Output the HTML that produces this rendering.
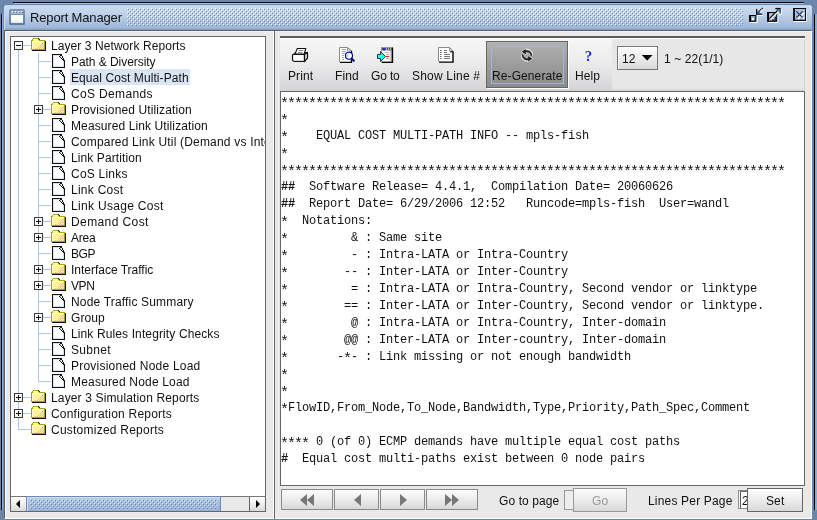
<!DOCTYPE html>
<html><head><meta charset="utf-8"><title>Report Manager</title>
<style>
*{box-sizing:border-box;margin:0;padding:0}
html,body{width:817px;height:520px;overflow:hidden}
body{background:#6a86a8;position:relative;font-family:"Liberation Sans",Arial,sans-serif;font-size:12px;color:#111}
.abs,.hl,.vl,.bx,.ic,.tl{position:absolute}
#shT{left:13px;top:2px;width:791px;height:1px;background:#000}
#shT2{left:14px;top:3px;width:790px;height:1px;background:#a9c1e0}
#shL{left:1px;top:14px;width:1px;height:496px;background:#000}
#shR{left:814px;top:14px;width:1px;height:496px;background:#000}
#edgeL{left:2px;top:14px;width:2px;height:496px;background:linear-gradient(90deg,#8eacd3 50%,#6f8cb2 50%)}
#edgeR{left:815px;top:14px;width:2px;height:496px;background:#8eabd0}
#win{left:4px;top:5px;width:808px;height:514px;background:#e9e9e9;border-radius:3px 3px 0 0}
#title{left:4px;top:5px;width:808px;height:25px;background:linear-gradient(#c9dbf0 0,#c0d3ea 30%,#a9bedd 75%,#a2b8d9 90%,#809cc5 100%);border-radius:4px 4px 0 0;border-top:1px solid #c5d6ec;border-left:1px solid #c9daef}
#bumps{left:127px;top:9px;width:618px;height:17px;background-image:radial-gradient(circle at 0.5px 0.5px,#e8f0fa 0.6px,transparent 0.9px),radial-gradient(circle at 1.5px 1.5px,#8098ba 0.6px,transparent 0.9px);background-size:4px 4px;opacity:.9}
#ttext{left:30px;top:10px;font-size:13px;line-height:16px;letter-spacing:-.15px;white-space:nowrap;color:#111}
#cb{left:4px;top:30px;width:808px;height:489px;border:1px solid #56606e;border-left-color:#5a5a5a;border-right-color:#fff;border-bottom-color:#fff}
#cb2{left:5px;top:31px;width:806px;height:487px;border-left:1px solid #fff;border-top:1px solid #f4f4f4}
#tree{left:10px;top:36px;width:256px;height:476px;background:#fff;border:1px solid #666;overflow:hidden}
#treein{left:0;top:0;width:817px;height:520px;clip-path:inset(37px 552px 24px 11px)}
.hl{height:1px;background:#adc7ea}
.vl{width:1px;background:#adc7ea}
.bx{width:9px;height:9px;border:1px solid #3a3a3a;background:linear-gradient(135deg,#fff,#eee)}
.bx b{position:absolute;left:1px;top:3px;width:5px;height:1px;background:#111}
.bx u{position:absolute;left:3px;top:1px;width:1px;height:5px;background:#111}
.tl{height:16px;line-height:18px;padding:0 1px;white-space:nowrap;font-size:12px;color:#111;letter-spacing:.1px;overflow:hidden}
.sel{background:#dae5f4}
#hs{left:11px;top:496px;width:254px;height:15px;background:#e9e9e9;border-top:1px solid #777}
.sbtn{top:497px;width:16px;height:14px;background:linear-gradient(#fff,#f2f2f2 40%,#d9d9d9)}
#thumb{left:26px;top:496px;width:195px;height:15px;background:linear-gradient(#bdd0e8,#a5bddc 50%,#98b3d5);border:1px solid #6b8cba;border-bottom:0;box-shadow:inset 1px 1px 0 #cfdef0}
#thumbd{left:32px;top:499px;width:182px;height:10px;background-image:radial-gradient(circle at 0.5px 0.5px,#e4eefa 0.6px,transparent 0.9px),radial-gradient(circle at 1.5px 1.5px,#6f8cb2 0.6px,transparent 0.9px);background-size:4px 4px}
#divW{left:273px;top:31px;width:1px;height:488px;background:#fff}
#divD{left:274px;top:31px;width:1px;height:488px;background:#666}
#tb{left:280px;top:36px;width:525px;height:55px;border-top:2px solid #5a5a5a;background:#e7e7e7;box-shadow:inset -1px -1px 0 #d2d2d9,inset 0 -2px 0 #dcdce1}
#tbg{left:280px;top:39px;width:332px;height:52px;background:linear-gradient(#f6f6f6,#ececec 45%,#d4d4d8)}
#tbw{left:280px;top:38px;width:526px;height:1px;background:#fff}
.tbl{top:69px;letter-spacing:.1px;font-size:12px;line-height:14px;white-space:nowrap;text-align:center}
#regen{left:486px;top:41px;width:82px;height:47px;background:linear-gradient(#b2b2b2,#9c9c9c 50%,#8c8c8c);border:1px solid #666;box-shadow:1px 1px 0 #fff}
#regenf{left:491px;top:46px;width:73px;height:38px;border:1px solid #9db8d9}
#combo{left:617px;top:46px;width:41px;height:24px;background:linear-gradient(#fff,#ececec 50%,#d8d8d8);border:1px solid #777;box-shadow:inset 1px 1px 0 #fff}
#ta{left:280px;top:91px;width:525px;height:395px;background:#fff;border:1px solid #666}
pre{position:absolute;left:281px;top:94px;font-family:"Liberation Mono","Courier New",monospace;font-size:12px;line-height:17px;letter-spacing:-0.2px;color:#111;white-space:pre}
.a{font-size:15px;letter-spacing:-2px;position:relative;top:3px;left:-1px;line-height:0}
.nb{top:489px;height:21px;background:linear-gradient(#fdfdfd,#ececec 50%,#d8d8d8);border:1px solid #8a8a8a}
.lbl{font-size:12px;line-height:14px;white-space:nowrap;letter-spacing:.1px}
#all{position:absolute;left:0;top:0;width:817px;height:520px;will-change:transform}
</style></head><body>
<div id="all">
<div class="abs" id="shT"></div><div class="abs" id="shT2"></div>
<div class="abs" id="edgeL"></div><div class="abs" id="edgeR"></div>
<div class="abs" id="shL"></div><div class="abs" id="shR"></div>
<div class="abs" id="win"></div>
<div class="abs" id="title"></div>
<svg class="abs" style="left:127px;top:8px" width="616" height="18"><defs><pattern id="bp" width="4" height="4" patternUnits="userSpaceOnUse"><rect x="0" y="0" width="1" height="1" fill="#fff"/><rect x="2" y="2" width="1" height="1" fill="#fff"/><rect x="1" y="1" width="1" height="1" fill="#6f88ad"/><rect x="3" y="3" width="1" height="1" fill="#6f88ad"/></pattern></defs><rect width="616" height="18" fill="url(#bp)"/></svg>
<svg class="abs" style="left:9px;top:9px" width="16" height="16" viewBox="0 0 16 16"><defs><linearGradient id="wi" x1="0" y1="0" x2="0" y2="1"><stop offset="0" stop-color="#7d97b8"/><stop offset="1" stop-color="#5f7a9d"/></linearGradient><linearGradient id="ww" x1="0" y1="0" x2="0" y2="1"><stop offset="0" stop-color="#fff"/><stop offset=".6" stop-color="#fff"/><stop offset="1" stop-color="#e4e4e4"/></linearGradient></defs><rect x="0" y="0" width="16" height="16" rx="1.500" fill="url(#wi)"/><rect x="2" y="2" width="12" height="3" fill="#a9bfdb"/><g fill="#fff"><rect x="3" y="2" width="1" height="1"/><rect x="6" y="2" width="1" height="1"/><rect x="9" y="2" width="1" height="1"/><rect x="12" y="2" width="1" height="1"/></g><g fill="#56708f"><rect x="4" y="3" width="1" height="1"/><rect x="7" y="3" width="1" height="1"/><rect x="10" y="3" width="1" height="1"/><rect x="13" y="3" width="1" height="1"/></g><rect x="2" y="6" width="12" height="8" fill="url(#ww)"/></svg>
<svg class="abs" style="left:745px;top:5px" width="66" height="22" viewBox="745 5 66 22">
<defs><linearGradient id="bg1" x1="0" y1="0" x2="1" y2="1"><stop offset="0" stop-color="#b4c8e2"/><stop offset="1" stop-color="#56759f"/></linearGradient></defs>
<path d="M750 22.400 L757.300 22.400 L757.300 16.500" fill="none" stroke="#fff" stroke-width="1"/>
<rect x="749.600" y="15.500" width="6.200" height="5.800" fill="url(#bg1)" stroke="#000" stroke-width="1"/>
<path d="M750.500 15.500 L750.500 21.500" stroke="#000" stroke-width="1"/>
<rect x="752" y="18" width="2" height="2" fill="#fff"/>
<path d="M757.500 15.500 L763 15.500" stroke="#fff" stroke-width="1"/>
<path d="M763.700 9.200 L760 13" stroke="#fff" stroke-width="1" opacity=".8"/>
<path d="M757 10 L761.500 14 L757 14 Z" fill="#56759f"/>
<path d="M756.600 9 L756.600 14.200 L762.300 14.200" fill="none" stroke="#000" stroke-width="1.100"/>
<path d="M762.700 7.800 L758.200 12.300" fill="none" stroke="#111" stroke-width="1.200" stroke-dasharray="1.300 .700"/>
<path d="M768 22.400 L777.800 22.400 L777.800 15" fill="none" stroke="#fff" stroke-width="1"/>
<rect x="767.600" y="12.500" width="9.100" height="8.800" fill="url(#bg1)" stroke="#000" stroke-width="1"/>
<path d="M768.500 12.500 L768.500 21.500" stroke="#000" stroke-width="1"/>
<rect x="769.500" y="14.500" width="4" height="4.500" fill="#c6d8ef" opacity=".75"/>
<path d="M775.700 17 L775.700 20.300 L772 20.300" fill="none" stroke="#111" stroke-width="1"/>
<path d="M770.500 19.500 L778.500 11.500" stroke="#fff" stroke-width="1.200"/>
<path d="M769.300 18.700 L777.800 10.200" stroke="#000" stroke-width="1.100"/>
<path d="M781.600 9 L781.600 14.300 L779 14.300" fill="none" stroke="#fff" stroke-width="1"/>
<path d="M776 9 L780.600 9 L780.600 13.600 Z" fill="#56759f"/>
<path d="M775.300 8.500 L780.800 8.500" stroke="#000" stroke-width="1.200"/>
<path d="M780.500 8.500 L780.500 13.600" stroke="#3a5680" stroke-width="1"/>
<path d="M794 21.500 L806.500 21.500 L806.500 9" fill="none" stroke="#fff" stroke-width="1"/>
<rect x="793.600" y="8.500" width="12" height="12" fill="#a9bfdc" stroke="#000" stroke-width="1"/>
<path d="M794.500 9 L794.500 20" stroke="#111" stroke-width="1"/>
<path d="M795 19.900 L805 19.900" fill="none" stroke="#111" stroke-width=".6"/>
<path d="M797 12 L803 18 M803 12 L797 18" stroke="#fff" stroke-width="1.600" transform="translate(1,1)"/>
<path d="M796.500 11.500 L802.500 17.500 M802.500 11.500 L796.500 17.500" stroke="#5a7396" stroke-width="1.700"/>
<path d="M796.500 11.500 L802.500 17.500 M802.500 11.500 L796.500 17.500" stroke="#111" stroke-width="1" stroke-dasharray="1.400 1"/>
</svg>
<div class="abs" id="ttext">Report Manager</div>
<div class="abs" id="cb"></div><div class="abs" id="cb2"></div>
<div class="abs" id="tree"></div>
<div class="abs" id="treein">
<i class="vl" style="left:18px;top:50px;height:380px"></i>
<i class="vl" style="left:38px;top:53px;height:329px"></i>
<svg width="0" height="0" style="position:absolute"><defs><g id="fo" shape-rendering="crispEdges"><path d="M1 3 L2 1 L7 1 L8 3 L13 3 L13 11 L1 11 Z" fill="#fcf590"/><g fill="#fffce0"><rect x="2" y="1" width="5" height="1"/><rect x="1" y="3" width="1" height="8"/><rect x="2" y="3" width="11" height="1"/></g><g fill="#f9b8a0"><rect x="12" y="4" width="1" height="1"/><rect x="11" y="5" width="1" height="1"/><rect x="10" y="6" width="1" height="1"/><rect x="12" y="6" width="1" height="1"/><rect x="9" y="7" width="1" height="1"/><rect x="11" y="7" width="1" height="1"/><rect x="8" y="8" width="1" height="1"/><rect x="10" y="8" width="1" height="1"/><rect x="12" y="8" width="1" height="1"/><rect x="7" y="9" width="1" height="1"/><rect x="9" y="9" width="1" height="1"/><rect x="11" y="9" width="1" height="1"/><rect x="4" y="10" width="1" height="1"/><rect x="6" y="10" width="1" height="1"/><rect x="8" y="10" width="1" height="1"/><rect x="10" y="10" width="1" height="1"/><rect x="12" y="10" width="1" height="1"/></g><g fill="#aaa214"><rect x="0" y="3" width="1" height="9"/><rect x="1" y="1" width="1" height="2"/><rect x="2" y="0" width="5" height="1"/><rect x="7" y="1" width="1" height="1"/><rect x="8" y="2" width="6" height="1"/><rect x="13" y="2" width="1" height="10"/><rect x="0" y="11" width="14" height="1"/><rect x="0" y="2" width="1" height="1"/></g><g fill="#111"><rect x="14" y="3" width="1" height="10"/><rect x="1" y="12" width="14" height="1"/><rect x="7" y="0" width="1" height="1"/><rect x="8" y="1" width="1" height="1"/></g></g><g id="fi" shape-rendering="crispEdges"><rect x="1" y="1" width="11" height="12" fill="#fff"/><g fill="#d3e3f8"><rect x="1" y="1" width="1" height="12"/><rect x="1" y="1" width="7" height="1"/><rect x="11" y="7" width="1" height="6"/><rect x="1" y="12" width="11" height="1"/><rect x="8" y="2" width="1" height="1"/><rect x="9" y="3" width="1" height="1"/><rect x="10" y="4" width="1" height="1"/><rect x="8" y="3" width="1" height="1"/><rect x="9" y="4" width="1" height="1"/><rect x="10" y="5" width="1" height="1"/></g><g fill="#111"><rect x="0" y="0" width="1" height="14"/><rect x="0" y="0" width="10" height="1"/><rect x="0" y="13" width="13" height="1"/><rect x="12" y="6" width="1" height="8"/><rect x="7" y="2" width="1" height="1"/><rect x="8" y="3" width="1" height="1"/><rect x="9" y="4" width="1" height="1"/><rect x="10" y="5" width="1" height="1"/><rect x="11" y="6" width="1" height="1"/><rect x="8" y="1" width="2" height="1"/><rect x="10" y="2" width="1" height="2"/><rect x="11" y="4" width="1" height="2"/></g></g></defs></svg>
<i class="hl" style="left:23px;top:45px;width:8px"></i>
<span class="bx" style="left:14px;top:41px"><b></b></span>
<svg class="ic" style="left:31px;top:38px" width="16" height="14"><use href="#fo"/></svg>
<span class="tl" style="left:50px;top:37px;letter-spacing:0.077px">Layer 3 Network Reports</span>
<i class="hl" style="left:38px;top:61px;width:13px"></i>
<svg class="ic" style="left:52px;top:54px" width="13" height="14"><use href="#fi"/></svg>
<span class="tl" style="left:70px;top:53px;letter-spacing:-0.05px">Path &amp; Diversity</span>
<i class="hl" style="left:38px;top:77px;width:13px"></i>
<svg class="ic" style="left:52px;top:70px" width="13" height="14"><use href="#fi"/></svg>
<span class="tl sel" style="left:70px;top:69px;letter-spacing:0.075px">Equal Cost Multi-Path</span>
<i class="hl" style="left:38px;top:93px;width:13px"></i>
<svg class="ic" style="left:52px;top:86px" width="13" height="14"><use href="#fi"/></svg>
<span class="tl" style="left:70px;top:85px;letter-spacing:0.35px">CoS Demands</span>
<i class="hl" style="left:43px;top:109px;width:8px"></i>
<span class="bx" style="left:34px;top:105px"><b></b><u></u></span>
<svg class="ic" style="left:51px;top:102px" width="16" height="14"><use href="#fo"/></svg>
<span class="tl" style="left:70px;top:101px;letter-spacing:0.123px">Provisioned Utilization</span>
<i class="hl" style="left:38px;top:125px;width:13px"></i>
<svg class="ic" style="left:52px;top:118px" width="13" height="14"><use href="#fi"/></svg>
<span class="tl" style="left:70px;top:117px;letter-spacing:0.11px">Measured Link Utilization</span>
<i class="hl" style="left:38px;top:141px;width:13px"></i>
<svg class="ic" style="left:52px;top:134px" width="13" height="14"><use href="#fi"/></svg>
<span class="tl" style="left:70px;top:133px;letter-spacing:0.192px">Compared Link Util (Demand vs Interface)</span>
<i class="hl" style="left:38px;top:157px;width:13px"></i>
<svg class="ic" style="left:52px;top:150px" width="13" height="14"><use href="#fi"/></svg>
<span class="tl" style="left:70px;top:149px;letter-spacing:0.1px">Link Partition</span>
<i class="hl" style="left:38px;top:173px;width:13px"></i>
<svg class="ic" style="left:52px;top:166px" width="13" height="14"><use href="#fi"/></svg>
<span class="tl" style="left:70px;top:165px;letter-spacing:0.225px">CoS Links</span>
<i class="hl" style="left:38px;top:189px;width:13px"></i>
<svg class="ic" style="left:52px;top:182px" width="13" height="14"><use href="#fi"/></svg>
<span class="tl" style="left:70px;top:181px;letter-spacing:0.256px">Link Cost</span>
<i class="hl" style="left:38px;top:205px;width:13px"></i>
<svg class="ic" style="left:52px;top:198px" width="13" height="14"><use href="#fi"/></svg>
<span class="tl" style="left:70px;top:197px;letter-spacing:0.314px">Link Usage Cost</span>
<i class="hl" style="left:43px;top:221px;width:8px"></i>
<span class="bx" style="left:34px;top:217px"><b></b><u></u></span>
<svg class="ic" style="left:51px;top:214px" width="16" height="14"><use href="#fo"/></svg>
<span class="tl" style="left:70px;top:213px;letter-spacing:0.4px">Demand Cost</span>
<i class="hl" style="left:43px;top:237px;width:8px"></i>
<span class="bx" style="left:34px;top:233px"><b></b><u></u></span>
<svg class="ic" style="left:51px;top:230px" width="16" height="14"><use href="#fo"/></svg>
<span class="tl" style="left:70px;top:229px;letter-spacing:-0.233px">Area</span>
<i class="hl" style="left:38px;top:253px;width:13px"></i>
<svg class="ic" style="left:52px;top:246px" width="13" height="14"><use href="#fi"/></svg>
<span class="tl" style="left:70px;top:245px;letter-spacing:-0.4px">BGP</span>
<i class="hl" style="left:43px;top:269px;width:8px"></i>
<span class="bx" style="left:34px;top:265px"><b></b><u></u></span>
<svg class="ic" style="left:51px;top:262px" width="16" height="14"><use href="#fo"/></svg>
<span class="tl" style="left:70px;top:261px;letter-spacing:-0.009px">Interface Traffic</span>
<i class="hl" style="left:43px;top:285px;width:8px"></i>
<span class="bx" style="left:34px;top:281px"><b></b><u></u></span>
<svg class="ic" style="left:51px;top:278px" width="16" height="14"><use href="#fo"/></svg>
<span class="tl" style="left:70px;top:277px;letter-spacing:-0.4px">VPN</span>
<i class="hl" style="left:38px;top:301px;width:13px"></i>
<svg class="ic" style="left:52px;top:294px" width="13" height="14"><use href="#fi"/></svg>
<span class="tl" style="left:70px;top:293px;letter-spacing:0.174px">Node Traffic Summary</span>
<i class="hl" style="left:43px;top:317px;width:8px"></i>
<span class="bx" style="left:34px;top:313px"><b></b><u></u></span>
<svg class="ic" style="left:51px;top:310px" width="16" height="14"><use href="#fo"/></svg>
<span class="tl" style="left:70px;top:309px;letter-spacing:0.1px">Group</span>
<i class="hl" style="left:38px;top:333px;width:13px"></i>
<svg class="ic" style="left:52px;top:326px" width="13" height="14"><use href="#fi"/></svg>
<span class="tl" style="left:70px;top:325px;letter-spacing:0.119px">Link Rules Integrity Checks</span>
<i class="hl" style="left:38px;top:349px;width:13px"></i>
<svg class="ic" style="left:52px;top:342px" width="13" height="14"><use href="#fi"/></svg>
<span class="tl" style="left:70px;top:341px;letter-spacing:0.3px">Subnet</span>
<i class="hl" style="left:38px;top:365px;width:13px"></i>
<svg class="ic" style="left:52px;top:358px" width="13" height="14"><use href="#fi"/></svg>
<span class="tl" style="left:70px;top:357px;letter-spacing:0.225px">Provisioned Node Load</span>
<i class="hl" style="left:38px;top:381px;width:13px"></i>
<svg class="ic" style="left:52px;top:374px" width="13" height="14"><use href="#fi"/></svg>
<span class="tl" style="left:70px;top:373px;letter-spacing:0.182px">Measured Node Load</span>
<i class="hl" style="left:23px;top:397px;width:8px"></i>
<span class="bx" style="left:14px;top:393px"><b></b><u></u></span>
<svg class="ic" style="left:31px;top:390px" width="16" height="14"><use href="#fo"/></svg>
<span class="tl" style="left:50px;top:389px;letter-spacing:0.144px">Layer 3 Simulation Reports</span>
<i class="hl" style="left:23px;top:413px;width:8px"></i>
<span class="bx" style="left:14px;top:409px"><b></b><u></u></span>
<svg class="ic" style="left:31px;top:406px" width="16" height="14"><use href="#fo"/></svg>
<span class="tl" style="left:50px;top:405px;letter-spacing:0.2px">Configuration Reports</span>
<i class="hl" style="left:18px;top:429px;width:13px"></i>
<svg class="ic" style="left:31px;top:422px" width="16" height="14"><use href="#fo"/></svg>
<span class="tl" style="left:50px;top:421px;letter-spacing:0.235px">Customized Reports</span>
</div>
<div class="abs" id="hs"></div>
<div class="abs sbtn" style="left:11px;width:15px"></div>
<div class="abs sbtn" style="left:249px;border-left:1px solid #666"></div>
<div class="abs" id="thumb"></div><svg class="abs" style="left:30px;top:499px" width="187" height="10"><defs><pattern id="bp2" width="4" height="4" patternUnits="userSpaceOnUse"><rect x="0" y="0" width="1" height="1" fill="#d4e2f3"/><rect x="2" y="2" width="1" height="1" fill="#d4e2f3"/><rect x="1" y="1" width="1" height="1" fill="#6785b0"/><rect x="3" y="3" width="1" height="1" fill="#6785b0"/></pattern></defs><rect width="187" height="10" fill="url(#bp2)"/></svg>
<svg class="abs" style="left:11px;top:497px" width="16" height="14"><path d="M5 7 L9 3 L9 11 Z" fill="#000"/></svg>
<svg class="abs" style="left:249px;top:497px" width="16" height="14"><path d="M11 7 L7 3 L7 11 Z" fill="#000"/></svg>
<div class="abs" id="divW"></div><div class="abs" id="divD"></div>
<div class="abs" id="tb"></div><div class="abs" id="tbg"></div><div class="abs" id="tbw"></div>
<div class="abs" id="regen"></div><div class="abs" id="regenf"></div>
<svg class="abs" style="left:290px;top:46px" width="20" height="18" viewBox="0 0 20 18">
<defs><linearGradient id="pg" x1="0" y1="0" x2="0" y2="1"><stop offset="0" stop-color="#fff"/><stop offset=".7" stop-color="#fff"/><stop offset="1" stop-color="#bbb"/></linearGradient></defs>
<path d="M7.300 2.500 L15.700 2.500 L14.300 8 L5 8 Z" fill="#fff" stroke="#111" stroke-width="1.100"/>
<path d="M8.500 4.500 L13.200 4.500 M7.800 6.500 L12.400 6.500" stroke="#888" stroke-width="1"/>
<path d="M2.600 9 L5 6.700 M15 6.300 L17.500 6.800" fill="none" stroke="#111" stroke-width="1"/>
<path d="M2.500 9.300 Q2.500 8.500 3.300 8.500 L14.500 8.500 L14.500 15.500 L4.500 15.500 Q2.500 15.300 2.500 13.500 Z" fill="url(#pg)" stroke="#111" stroke-width="1.200"/>
<path d="M14.500 8.500 L17.500 6.500 L17.500 12.200 L14.500 15.500 Z" fill="#d8d8d8" stroke="#111" stroke-width="1.200" stroke-linejoin="round"/>
</svg>
<svg class="abs" style="left:338px;top:46px" width="20" height="18" viewBox="0 0 20 18">
<path d="M1.500 1.500 L9.500 1.500 L13.500 5 L13.500 16 L1.500 16 Z" fill="#fff"/>
<path d="M9.500 1.500 L9.500 5 L13.500 5 Z" fill="#eee" stroke="#999" stroke-width="1"/>
<path d="M1.500 16 L1.500 1.500 L9.500 1.500 L13.300 5" fill="none" stroke="#8a8a8a" stroke-width="1"/>
<path d="M13.500 4.800 L13.500 16.300 L2 16.300" fill="none" stroke="#000" stroke-width="1.300"/>
<path d="M4 3.500 L8 3.500 M4 5.500 L8 5.500 M4 7.500 L7 7.500 M4 9.500 L6 9.500 M4 11.500 L6 11.500 M4 13.500 L6 13.500" stroke="#aaa" stroke-width="1"/>
<circle cx="11" cy="9.800" r="3.500" fill="#fff" stroke="#00008c" stroke-width="1.100"/>
<path d="M9.300 10.800 L9.300 9.300 L10.400 8.300" stroke="#3ff" stroke-width="1.100" fill="none"/>
<path d="M13.700 12.600 L15.800 14.700" stroke="#00008c" stroke-width="2" stroke-linecap="round"/>
</svg>
<svg class="abs" style="left:376px;top:46px" width="20" height="18" viewBox="0 0 20 18">
<defs><linearGradient id="ng" x1="0" y1="0" x2="1" y2="0"><stop offset="0" stop-color="#fff"/><stop offset=".7" stop-color="#fff"/><stop offset="1" stop-color="#aaa"/></linearGradient></defs>
<rect x="5.500" y="1.500" width="10.500" height="14.500" fill="url(#ng)" stroke="#999" stroke-width="1"/>
<path d="M16.500 1.500 L16.500 16.400 L6 16.400" fill="none" stroke="#000" stroke-width="1.300"/>
<rect x="6" y="2" width="10" height="2.400" fill="#555"/>
<rect x="7" y="2" width="2" height="2.400" fill="#22f"/>
<rect x="10" y="2.500" width="1" height="1" fill="#fff"/><rect x="12" y="2.500" width="1" height="1" fill="#fff"/><rect x="14" y="2.500" width="1" height="1" fill="#fff"/>
<path d="M8.500 6.500 L13 6.500 M10 8.500 L13 8.500 M10 12.500 L13 12.500" stroke="#bbb" stroke-width="1"/>
<path d="M10 10.500 L13.200 10.500" stroke="#f22" stroke-width="1.200"/>
<path d="M1.500 8.500 L4.500 8.500 L4.500 5.600 L9.500 10.500 L4.500 15.400 L4.500 12.500 L1.500 12.500 Z" fill="#2ff" stroke="#000" stroke-width=".8"/>
</svg>
<svg class="abs" style="left:436px;top:46px" width="20" height="18" viewBox="0 0 20 18">
<path d="M2.500 1.500 L13.500 1.500 L16.500 5 L16.500 15.500 L2.500 15.500 Z" fill="#fff"/>
<path d="M13.500 1.500 L13.500 5 L16.800 5 Z" fill="#f2f2f2" stroke="#999" stroke-width="1"/>
<path d="M2.500 15.500 L2.500 1.500 L13.500 1.500 L16.800 5" fill="none" stroke="#8a8a8a" stroke-width="1"/>
<path d="M17 5.300 L17 16.100 L3 16.100" fill="none" stroke="#000" stroke-width="1.400"/>
<path d="M14 5.800 L16.500 5.800" stroke="#111" stroke-width="1.200"/>
<path d="M4 4.500 L5.700 4.500 M8 4.500 L11 4.500 M4 6.500 L5.700 6.500 M8 6.500 L11 6.500 M4 8.500 L5.700 8.500 M8 8.500 L14 8.500 M4 10.500 L5.700 10.500 M8 10.500 L14 10.500 M4 12.500 L5.700 12.500 M8 12.500 L14 12.500" stroke="#777" stroke-width="1"/>
</svg>
<svg class="abs" style="left:519px;top:47px" width="16" height="17" viewBox="0 0 16 17">
<g fill="none" stroke="#fff" stroke-width="3.200" opacity=".55"><path d="M5 4.600 A4.400 4.400 0 0 1 12.400 8.600"/><path d="M11 11.800 A4.400 4.400 0 0 1 3.600 7.800"/></g>
<g fill="#fff" opacity=".55"><path d="M1.800 4.800 L7.400 1 L7.400 8.200 Z"/><path d="M14.200 11.600 L8.600 15.400 L8.600 8.200 Z"/></g>
<g fill="none" stroke="#1a1a1a" stroke-width="1.700"><path d="M6 4.600 A4.400 4.400 0 0 1 12.400 8.800"/><path d="M10 11.800 A4.400 4.400 0 0 1 3.600 7.600"/></g>
<path d="M2.800 4.700 L6.800 2 L6.800 7.300 Z" fill="#1a1a1a"/><path d="M13.200 11.700 L9.200 14.400 L9.200 9.100 Z" fill="#1a1a1a"/>
</svg>
<div class="abs" style="left:584px;top:47px;width:9px;height:18px;font:bold 15px/18px 'Liberation Serif',serif;color:#2222ff;text-align:center">?</div>
<div class="abs tbl" style="left:288px">Print</div>
<div class="abs tbl" style="left:335px">Find</div>
<div class="abs tbl" style="left:371px;letter-spacing:-.15px">Go to</div>
<div class="abs tbl" style="left:412px;letter-spacing:.2px">Show Line #</div>
<div class="abs tbl" style="left:492px">Re-Generate</div>
<div class="abs tbl" style="left:575px">Help</div>
<div class="abs" id="combo"></div>
<div class="abs lbl" style="left:622px;top:52px">12</div>
<svg class="abs" style="left:640px;top:54px" width="14" height="8"><path d="M1.800 1 L12.600 1 L7.200 6.600 Z" fill="#000"/></svg>
<div class="abs lbl" style="left:664px;top:52px">1 ~ 22(1/1)</div>
<div class="abs" id="ta"></div>
<pre><span class="a">************************************************************************</span>
<span class="a">*</span>
<span class="a">*</span>    EQUAL COST MULTI-PATH INFO -- mpls-fish
<span class="a">*</span>
<span class="a">************************************************************************</span>
<b>##</b>  Software Release= 4.4.1,  Compilation Date= 20060626
<b>##</b>  Report Date= 6/29/2006 12:52   Runcode=mpls-fish  User=wandl
<span class="a">*</span>  Notations:
<span class="a">*</span>         &amp; : Same site
<span class="a">*</span>         - : Intra-LATA or Intra-Country
<span class="a">*</span>        -- : Inter-LATA or Inter-Country
<span class="a">*</span>         = : Intra-LATA or Intra-Country, Second vendor or linktype
<span class="a">*</span>        == : Inter-LATA or Inter-Country, Second vendor or linktype.
<span class="a">*</span>         @ : Intra-LATA or Intra-Country, Inter-domain
<span class="a">*</span>        @@ : Inter-LATA or Inter-country, Inter-domain
<span class="a">*</span>       -<span class="a">*</span>- : Link missing or not enough bandwidth
<span class="a">*</span>
<span class="a">*</span>
<span class="a">*</span>FlowID,From_Node,To_Node,Bandwidth,Type,Priority,Path_Spec,Comment

<span class="a">****</span> 0 (of 0) ECMP demands have multiple equal cost paths
<b>#</b>  Equal cost multi-paths exist between 0 node pairs</pre>
<div class="abs nb" style="left:281px;width:52px"></div>
<div class="abs nb" style="left:334px;width:45px"></div>
<div class="abs nb" style="left:380px;width:45px"></div>
<div class="abs nb" style="left:426px;width:52px"></div>
<svg class="abs" style="left:281px;top:489px" width="200" height="21" viewBox="0 0 200 21"><g fill="#777">
<path d="M19 11 L26 5 L26 17 Z M26 11 L33 5 L33 17 Z"/>
<path d="M73 11 L80 5 L80 17 Z"/>
<path d="M126 11 L119 5 L119 17 Z"/>
<path d="M171 11 L164 5 L164 17 Z M178 11 L171 5 L171 17 Z"/>
</g></svg>
<div class="abs lbl" style="left:499px;top:494px">Go to page</div>
<div class="abs" style="left:564px;top:490px;width:10px;height:20px;background:#eee;border:1px solid #999"></div>
<div class="abs nb" style="left:573px;width:54px;top:488px;height:24px;border-color:#999"></div>
<div class="abs lbl" style="left:592px;top:494px;color:#999">Go</div>
<div class="abs lbl" style="left:648px;top:494px;letter-spacing:.18px">Lines Per Page</div>
<div class="abs" style="left:738px;top:490px;width:11px;height:19px;background:#fff;border:1px solid #8a8a8a;overflow:hidden"><i style="position:absolute;left:1px;top:0;width:1px;height:17px;background:#555"></i><i style="position:absolute;left:1px;top:0;width:9px;height:1px;background:#666"></i><span class="lbl" style="position:absolute;left:3px;top:3px">22</span></div>
<div class="abs nb" style="left:747px;width:56px;top:488px;height:24px;border-color:#666"></div>
<div class="abs lbl" style="left:766px;top:494px">Set</div>
</div>
</body></html>
